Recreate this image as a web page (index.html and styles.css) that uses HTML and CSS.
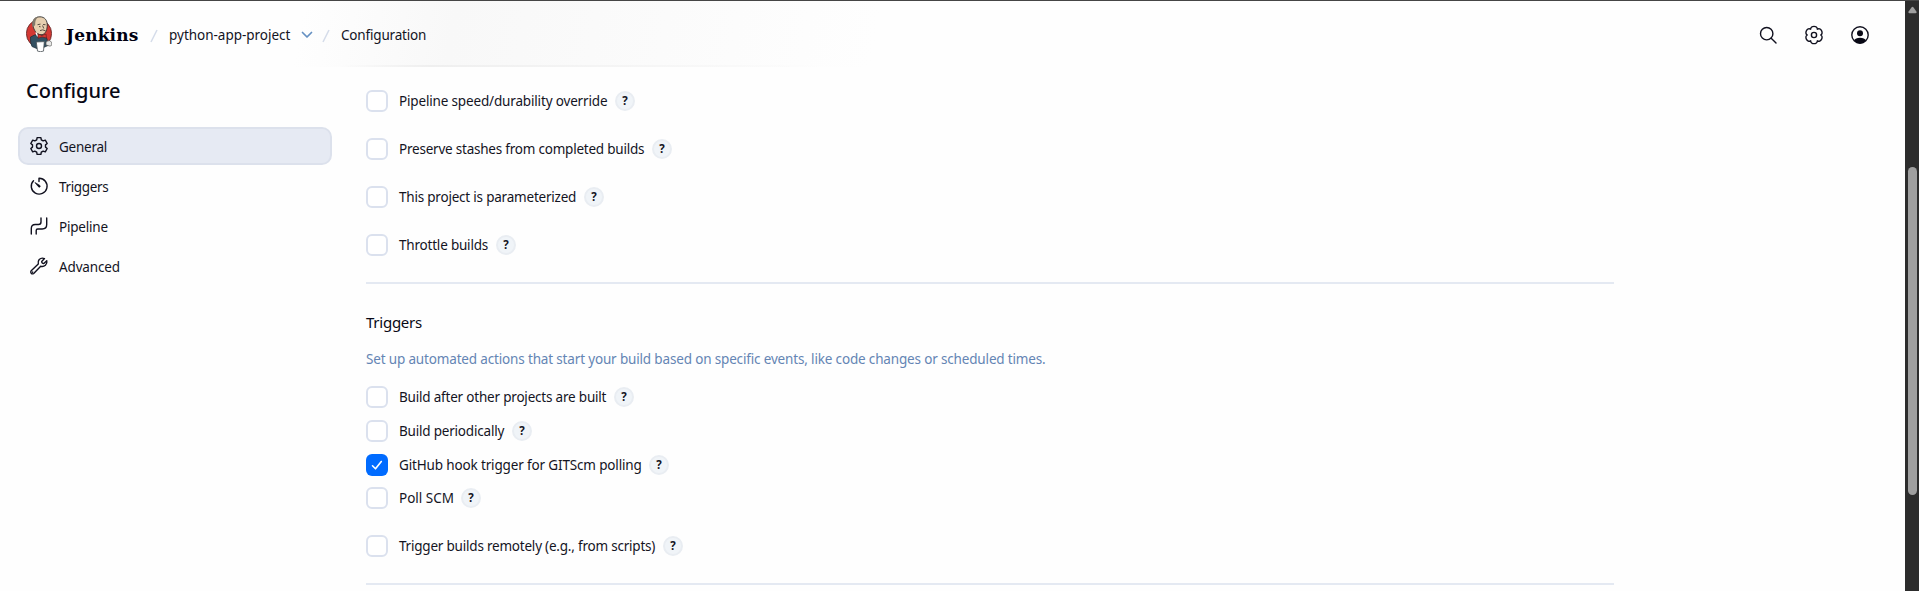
FILE: index.html
```html
<!DOCTYPE html>
<html lang="en">
<head>
<meta charset="utf-8">
<title>python-app-project Config - Jenkins</title>
<link rel="stylesheet" href="styles.css">
</head>
<body>
<div class="app">
  <div class="page">
    <header class="header">
      <svg class="logo" viewBox="0 0 26 36">
        <ellipse cx="13" cy="17.5" rx="12.6" ry="13.5" fill="#d33833" stroke="#5a2524" stroke-width=".8"/>
        <path d="M4.500 21q-.5 6 1.500 9.500l7 3 9-4-1-7-5-4-7.500.5z" fill="#335061" stroke="#1d2c35" stroke-width=".7"/>
        <path d="M7 9.500C6 4 9.500.8 14 .8s7.800 3.500 7.200 9.500c-.3 5-2.600 8.500-6.200 8.500-4.600-.4-7.200-4.600-8-9.300z" fill="#e6cfb0" stroke="#30302f" stroke-width=".9"/>
        <path d="M6.600 11.500C5 5 8 .9 13 .6 9.500 3 9.200 5.500 9.200 9z" fill="#81796c"/>
        <path d="M11.500 8.700l3-.6M17 8.500l2.500.2M16.500 9.500l1.300 3M14 14.600q2.500-1.600 5.500.2M13 10.500l1.600.3" fill="none" stroke="#4a3e36" stroke-width=".9"/>
        <path d="M10 16.500l1.500 3.200 3.500.2" fill="none" stroke="#fff" stroke-width="1.500"/>
        <path d="M12 18l3.700 1.500L20 18l.5 4-4.500-1-4 1.200z" fill="#d33833" stroke="#571c1c" stroke-width=".6"/>
        <path d="M10.300 26l8-.4-.8 9.500q-3 1.200-6 0z" fill="#fff" stroke="#4b5358" stroke-width=".8"/>
        <path d="M20 26q4-3 5.500.5t-2 3.500l-3.500-1z" fill="#e8e8e6" stroke="#555" stroke-width=".7"/>
      </svg>
      <span class="brand">Jenkins</span>
      <svg class="slash" viewBox="0 0 8 14"><path d="M1 13L7 1"/></svg>
      <span class="crumb crumb-project">python-app-project</span>
      <svg class="chevron" viewBox="0 0 12 8"><path d="M1.500 1.500L6 6l4.500-4.500"/></svg>
      <svg class="slash" viewBox="0 0 8 14"><path d="M1 13L7 1"/></svg>
      <span class="crumb crumb-config">Configuration</span>
      <div class="actions">
        <svg class="icon" viewBox="0 0 20 20"><circle cx="8.700" cy="8.700" r="6.200"/><path d="M13.200 13.200l4.800 4.800"/></svg>
        <svg class="icon" viewBox="0 0 20 20"><path d="M6.650 4.200C6.500.4 13.500.4 13.350 4.200C16.600 2.100 20.100 8.200 16.700 10C20.100 11.800 16.600 17.900 13.350 15.800C13.500 19.600 6.500 19.600 6.650 15.800C3.400 17.900-.1 11.800 3.300 10C-.1 8.200 3.400 2.100 6.650 4.200z"/><circle cx="10" cy="10" r="2.600"/></svg>
        <svg class="icon" viewBox="0 0 20 20"><circle cx="10" cy="10" r="8.200"/><g class="solid"><circle cx="10" cy="8.200" r="3"/><path d="M4 15.500q1.500-2.800 6-2.800t6 2.800q-2.400 3-6 3t-6-3z"/></g></svg>
      </div>
    </header>
    <div class="body">
      <aside class="sidebar">
        <h1 class="title">Configure</h1>
        <nav class="nav">
          <a class="nav-item active"><svg class="icon" viewBox="0 0 20 20"><path d="M7.700 3.800L8.100 1.600H11.900L12.300 3.800L14.200 4.900L16.300 4.100L18.200 7.500L16.500 8.900V11.100L18.200 12.500L16.300 15.900L14.200 15.100L12.300 16.200L11.900 18.400H8.100L7.700 16.200L5.800 15.100L3.700 15.900L1.800 12.500L3.500 11.100V8.900L1.800 7.500L3.700 4.100L5.800 4.900z"/><circle cx="10" cy="10" r="2.500"/></svg><span class="nav-general">General</span></a>
          <a class="nav-item"><svg class="icon" viewBox="0 0 20 20"><path d="M10 5.500V2.300A7.900 7.900 0 1 1 4.500 4.700"/><path d="M6.300 6.700l4.500 2.700a1 1 0 1 1-1.400 1.400z" class="solid needle"/></svg><span class="nav-triggers">Triggers</span></a>
          <a class="nav-item"><svg class="icon" viewBox="0 0 20 20"><path d="M2.300 18v-5.500q0-4 4-4h3.200q2.500 0 2.500-2.500V2M7.200 18v-3.500q0-1.500 1.500-1.500h4.500q4.500 0 4.500-4.500V2"/></svg><span class="nav-pipeline">Pipeline</span></a>
          <a class="nav-item"><svg class="icon" viewBox="0 0 20 20"><path d="M17.800 4.700l-3 2.800q-2 .1-2.100-2L15.500 2.600q-3-1.300-5.300.9Q8.700 5.300 9.300 8L2.200 14.800q-1 1.200 0 2.400t2.500.3l7-7.200q2.700.7 4.700-1 2-2 1.400-4.600z"/><path d="M3.600 16.200l.1-.1"/></svg><span class="nav-advanced">Advanced</span></a>
        </nav>
      </aside>
      <main class="main">
        <div class="options spaced">
          <label class="option"><i class="box"></i><span class="w1">Pipeline speed/durability override</span><b class="help">?</b></label>
          <label class="option"><i class="box"></i><span class="w2">Preserve stashes from completed builds</span><b class="help">?</b></label>
          <label class="option"><i class="box"></i><span class="w3">This project is parameterized</span><b class="help">?</b></label>
          <label class="option"><i class="box"></i><span class="w4">Throttle builds</span><b class="help">?</b></label>
        </div>
        <section class="section">
          <h2 class="section-title">Triggers</h2>
          <p class="description">Set up automated actions that start your build based on specific events, like code changes or scheduled times.</p>
          <div class="options">
            <label class="option"><i class="box"></i><span class="w5">Build after other projects are built</span><b class="help">?</b></label>
            <label class="option"><i class="box"></i><span class="w6">Build periodically</span><b class="help">?</b></label>
            <label class="option"><i class="box checked"><svg viewBox="0 0 22 22"><path d="M6.500 11.800l3 3 5.800-7.300"/></svg></i><span class="w7">GitHub hook trigger for GITScm polling</span><b class="help">?</b></label>
            <label class="option poll"><i class="box"></i><span class="w8">Poll SCM</span><b class="help">?</b></label>
            <label class="option remote"><i class="box"></i><span class="w9">Trigger builds remotely (e.g., from scripts)</span><b class="help">?</b></label>
          </div>
        </section>
        <div class="divider"></div>
      </main>
    </div>
  </div>
  <div class="scrollbar">
    <svg class="arrow" viewBox="0 0 10 8"><path d="M4 1Q5-.3 6 1l3.500 5q.5 1.500-1 1.500h-7Q0 7.500.5 6z"/></svg>
    <div class="thumb"></div>
  </div>
</div>
</body>
</html>
```
FILE: styles.css
```css
* { box-sizing: border-box; }

body {
  margin: 0;
  overflow: hidden;
  background: #fefefe;
  color: #14141f;
  font: 13.5px/20px "Noto Sans", "Open Sans", sans-serif;
}

.app {
  display: flex;
  height: 591px;
  border-top: 1px solid #454545;
}

.page { flex: 1; min-width: 0; }

/* Header */
.header {
  display: flex;
  align-items: center;
  height: 66px;
  padding: 1px 35px 0 26px;
  background:
    linear-gradient(90deg, transparent 340px, #efefef 430px, #f3f3f3 560px, transparent 820px) bottom / 100% 2px no-repeat,
    linear-gradient(100deg, transparent 300px, #f8f8f8 450px, #fbfbfb 660px, transparent 870px);
}

.logo { width: 26px; height: 36px; margin-bottom: 1px; }

.brand {
  width: 73px;
  margin-left: 14px;
  color: #000010;
  font: bold 17px/24px "DejaVu Serif", serif;
  letter-spacing: .15px;
  white-space: nowrap;
}

.slash { width: 8px; height: 14px; margin: 2px 0 0 11px; fill: none; stroke: #d5dcea; stroke-width: 1.5; }
.crumb { margin-left: 11px; white-space: nowrap; }
.crumb-project { width: 122px; letter-spacing: -.02px; }
.crumb-config { letter-spacing: -.18px; }
.chevron { width: 12px; height: 8px; margin-left: 10px; fill: none; stroke: #6590c2; stroke-width: 1.700; stroke-linecap: round; stroke-linejoin: round; }
.chevron + .slash { margin-left: 9px; }

.actions { display: flex; gap: 26px; margin-left: auto; }

.icon {
  flex: none;
  width: 20px;
  height: 20px;
  fill: none;
  stroke: #11111f;
  stroke-width: 1.4;
  stroke-linecap: round;
  stroke-linejoin: round;
}
.solid { fill: #080815; stroke: none; }
.needle { stroke: #080815; stroke-width: .7; }

/* Layout */
.body { display: flex; }
.sidebar { width: 332px; padding: 8px 0 0 18px; }

.title {
  margin: 0 0 21px 8px;
  color: #080815;
  font-size: 20px;
  font-weight: 500;
  line-height: 31px;
}

.nav { display: flex; flex-direction: column; gap: 2px; }
.nav-item {
  display: flex;
  align-items: center;
  gap: 10px;
  height: 38px;
  padding: 1px 9px 0;
  border: 2px solid transparent;
  border-radius: 10px;
}
.nav-item.active { border-color: #dce1ec; background: #e6eaf3; }
.nav-item .icon { margin-top: -1px; }
.nav-general { letter-spacing: -.25px; }
.nav-triggers { letter-spacing: -.35px; }
.nav-pipeline { letter-spacing: -.2px; }
.nav-advanced { letter-spacing: -.15px; }

.main { width: 1248px; margin-left: 34px; padding-top: 23px; }
.options { display: flex; flex-direction: column; gap: 12px; }
.spaced { gap: 26px; padding-bottom: 26px; }

.option { display: flex; align-items: center; height: 22px; white-space: nowrap; }
.option span { margin: 0 8px 0 11px; }
.w1 { width: 208px; letter-spacing: -.16px; }
.w2 { width: 245px; letter-spacing: -.22px; }
.w3 { width: 177px; letter-spacing: -.21px; }
.w4 { width: 89px; letter-spacing: -.2px; }
.w5 { width: 207px; letter-spacing: -.2px; }
.w6 { width: 105px; letter-spacing: -.2px; }
.w7 { width: 242px; letter-spacing: -.15px; }
.w8 { width: 54px; }
.w9 { width: 256px; letter-spacing: -.21px; }

.box {
  width: 22px;
  height: 22px;
  border: 2px solid #dbe1ee;
  border-radius: 6px;
  background: #fff;
}
.box.checked { border: 0; background: #006bff; }
.box svg { display: block; fill: none; stroke: #fff; stroke-width: 1.6; stroke-linecap: round; stroke-linejoin: round; }

.help {
  width: 20px;
  height: 20px;
  border: 2px solid #e9edf2;
  border-radius: 50%;
  background: #f0f4f8;
  font-size: 11.5px;
  line-height: 16px;
  text-align: center;
}

.section { padding: 27px 0 26px; border-top: 2px solid #e4e9f2; }
.section-title { margin: 0 0 16px; font-size: 15px; font-weight: 400; line-height: 22px; letter-spacing: -.25px; color: #080815; }
.description { margin: 0 0 17px; color: #6485b4; line-height: 20px; letter-spacing: -.16px; white-space: nowrap; }
.poll { margin-top: -1px; }
.remote { margin-top: 14px; }
.divider { height: 2px; background: #e4e9f2; }

/* Window scrollbar */
.scrollbar { width: 14px; padding: 5px 2px 0 3px; background: #2c2c2c; }
.arrow { display: block; width: 9px; height: 8px; fill: #9f9f9f; }
.thumb { height: 328px; margin-top: 153px; border-radius: 5px; background: #9f9f9f; }
```
